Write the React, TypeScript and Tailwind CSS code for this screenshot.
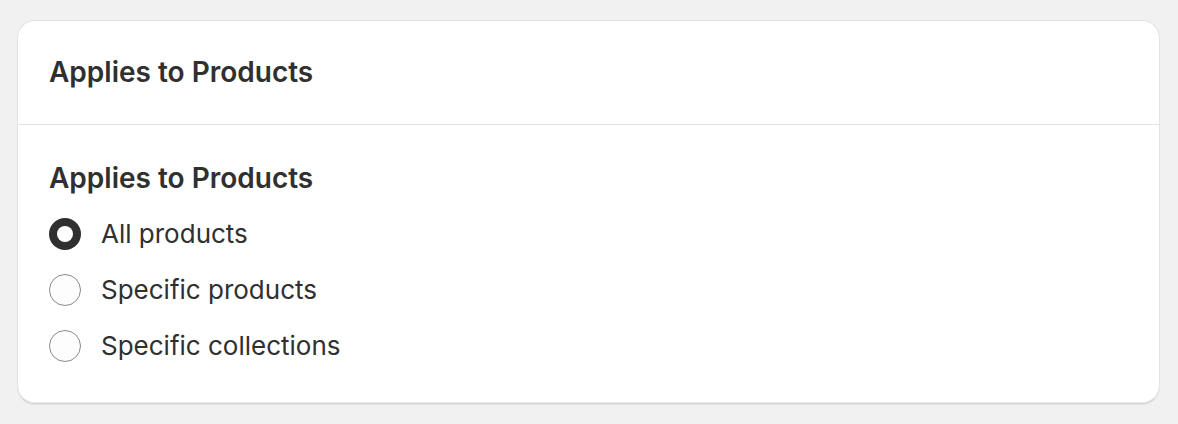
import React from 'react';

const options = ['All products', 'Specific products', 'Specific collections'];

function Radio({ checked }: { checked: boolean }) {
  if (checked) {
    return (
      <span className="flex h-[32px] w-[32px] shrink-0 items-center justify-center rounded-full bg-[#303030]">
        <span className="h-[16px] w-[16px] rounded-full bg-white" />
      </span>
    );
  }
  return (
    <span className="h-[32px] w-[32px] shrink-0 rounded-full border-[1.5px] border-[#8a8a8a] bg-[#fdfdfd]" />
  );
}

export default function App() {
  const selected = 0;

  return (
    <div
      className="min-h-[424px] w-full bg-[#f1f1f1] pt-[20px] pl-[17px] pr-[18px] text-[#303030]"
      style={{ fontFamily: 'Inter, "Noto Sans", sans-serif' }}
    >
      <div className="overflow-hidden rounded-[18px] border border-[#e3e3e3] border-b-[#d4d4d4] bg-white shadow-[0_1px_0_rgba(0,0,0,0.07),inset_0_-1px_0_rgba(0,0,0,0.08)]">
        <div className="px-[31px] pt-[31px] pb-[32px]">
          <h2 className="h-[40px] text-[28px] font-semibold leading-[40px]">
            Applies to Products
          </h2>
        </div>
        <div className="border-t border-[#e3e3e3] px-[31px] pt-[33px] pb-[37px]">
          <h3 className="h-[40px] text-[28px] font-semibold leading-[40px]">
            Applies to Products
          </h3>
          <div className="mt-[16px] flex flex-col gap-[16px]">
            {options.map((label, i) => (
              <label key={label} className="flex h-[40px] items-center gap-[20px]">
                <Radio checked={i === selected} />
                <span className="text-[26px] leading-[40px]">{label}</span>
              </label>
            ))}
          </div>
        </div>
      </div>
    </div>
  );
}
